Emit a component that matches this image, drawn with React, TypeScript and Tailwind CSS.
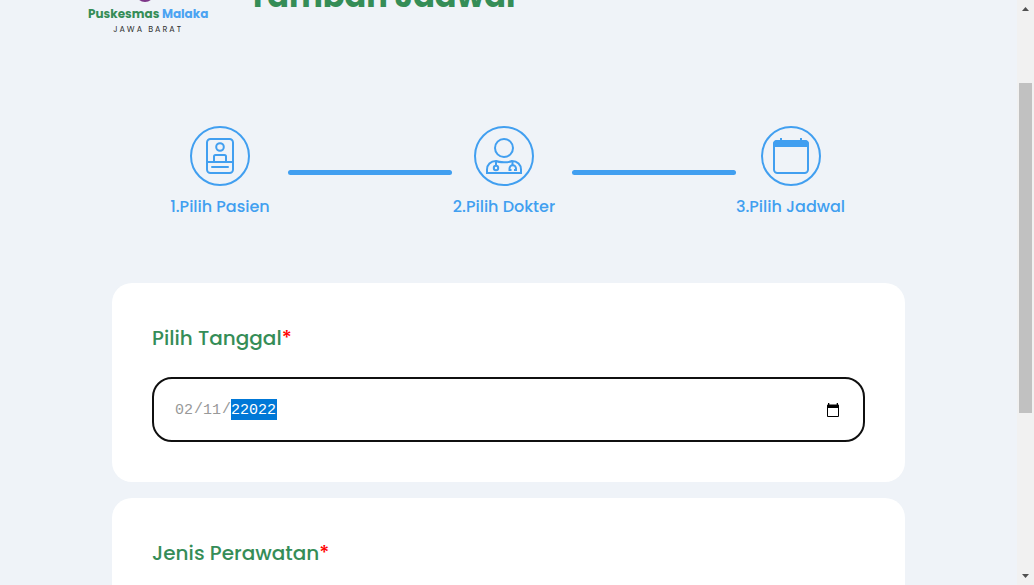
import { useState } from 'react';
import type { ReactNode } from 'react';

function PatientIcon() {
  return (
    <svg viewBox="0 0 40 40" className="size-10" fill="none" stroke="currentColor" strokeWidth="2" aria-hidden="true">
      <rect x="7" y="3" width="26" height="34" rx="3.5" />
      <circle cx="20" cy="11" r="3.8" />
      <path d="M14 26v-5.500a1.500 1.500 0 0 1 1.500-1.500h9a1.500 1.500 0 0 1 1.500 1.500V26M7 26h26" />
      <path d="M12 31h16" strokeLinecap="round" />
    </svg>
  );
}

function DoctorIcon() {
  return (
    <svg viewBox="0 0 40 40" className="size-10" fill="none" stroke="currentColor" strokeWidth="2" aria-hidden="true">
      <circle cx="20" cy="12" r="9" />
      <path d="M3 37v-3.500c0-4.500 3.500-8.500 9-8.500 2 1 5 1.200 8 1.200s6-.2 8-1.200c5.500 0 9 4 9 8.500V37Z" />
      <path d="M12 25.500v4.500M28.500 25.500v4" />
      <circle cx="12" cy="32" r="2.200" />
      <path d="M27.500 34h-2V32.500a3 3 0 0 1 6.500 0V34h-2" />
    </svg>
  );
}

function CalendarIcon() {
  return (
    <svg viewBox="0 0 40 40" className="size-10" fill="none" stroke="currentColor" strokeWidth="2" aria-hidden="true">
      <rect x="3" y="5" width="34" height="32" rx="3.500" />
      <path d="M2 11V8a4 4 0 0 1 4-4h28a4 4 0 0 1 4 4v3Z" fill="currentColor" stroke="none" />
      <path d="M10 2v4M30 2v4" />
    </svg>
  );
}

function Step({ label, icon }: { label: string; icon: ReactNode }) {
  return (
    <li className="flex min-w-[104px] flex-col items-center gap-[9px]">
      <span className="flex size-[60px] items-center justify-center rounded-full border-2 border-[#419ff0]">{icon}</span>
      <span className="text-base leading-6 font-medium whitespace-nowrap">{label}</span>
    </li>
  );
}

function StepLine() {
  return <li aria-hidden="true" className="ml-4 h-[5px] w-[164px] rounded-full bg-[#419ff0]" />;
}

function Required() {
  return <span className="text-[#f00]">*</span>;
}

function DateField() {
  const [day, setDay] = useState('02');
  const [month, setMonth] = useState('11');
  const [year, setYear] = useState('22022');
  return (
    <fieldset>
      <legend className="text-xl leading-[30px] font-medium text-[#358d57]">
        Pilih Tanggal<Required />
      </legend>
      <div className="mt-6 flex h-[65px] items-center rounded-[20px] border-2 border-[#101010] px-[21px] font-['Liberation_Mono',monospace] text-[15px] leading-5 text-[#999]">
        <input aria-label="Hari" value={day} onChange={(e) => setDay(e.target.value)} className="h-[21px] w-[19px] pt-px outline-none" />
        <span>/</span>
        <input aria-label="Bulan" value={month} onChange={(e) => setMonth(e.target.value)} className="h-[21px] w-[19px] pt-px outline-none" />
        <span>/</span>
        <input aria-label="Tahun" value={year} onChange={(e) => setYear(e.target.value)} className="h-[21px] w-[46px] bg-[#0078d7] pt-px text-white outline-none" />
        <button type="button" aria-label="Buka kalender" className="mr-0.5 ml-auto text-black">
          <svg viewBox="0 0 14 14" className="size-[14px]" aria-hidden="true">
            <path d="M1 2.500A1 1 0 0 1 2 1.500V0h1.300v1.500h7.400V0H12v1.500a1 1 0 0 1 1 1V13a1 1 0 0 1-1 1H2a1 1 0 0 1-1-1ZM2 5v8h10V5Z" fill="currentColor" fillRule="evenodd" />
          </svg>
        </button>
      </div>
    </fieldset>
  );
}

function Scrollbar() {
  return (
    <div aria-hidden="true" className="flex w-[17px] shrink-0 flex-col items-center bg-[#f1f1f1]">
      <svg viewBox="0 0 17 17" className="size-[17px]">
        <path d="M5 11h7L8.500 7Z" fill="#505050" />
      </svg>
      <div className="mt-[66px] h-[330px] w-[13px] bg-[#c1c1c1]" />
      <svg viewBox="0 0 17 17" className="mt-auto size-[17px]">
        <path d="M5 6h7l-3.500 4Z" fill="#505050" />
      </svg>
    </div>
  );
}

export default function App() {
  return (
    <div className="flex h-screen overflow-hidden bg-[#eff3f8] font-['Poppins','Inter',sans-serif]">
      <main className="min-w-0 flex-1 overflow-hidden">
        <header className="-mt-11 flex gap-10 px-[88px]">
          <div className="flex flex-col items-center">
            <svg viewBox="0 0 60 46" className="h-[46px] w-[60px]" fill="none" aria-hidden="true">
              <path d="M20 20v18.500a7 6 0 0 0 14 0V20" stroke="#7d3588" strokeWidth="3" />
            </svg>
            <p className="mt-1 text-xs leading-4 font-bold whitespace-nowrap text-[#358d57]">
              Puskesmas <span className="text-[#4ba3f2]">Malaka</span>
            </p>
            <p className="text-[8px] leading-4 tracking-[2px] text-[#333]">JAWA BARAT</p>
          </div>
          <h1 className="mt-4 text-[32px] leading-[48px] font-bold whitespace-nowrap text-[#358d57]">Tambah Jadwal</h1>
        </header>

        <ol className="mt-[88px] flex items-center justify-center pr-1 text-[#419ff0]">
          <Step label="1.Pilih Pasien" icon={<PatientIcon />} />
          <StepLine />
          <Step label="2.Pilih Dokter" icon={<DoctorIcon />} />
          <StepLine />
          <Step label="3.Pilih Jadwal" icon={<CalendarIcon />} />
        </ol>

        <form className="mx-28 mt-16 flex flex-col gap-4">
          <section className="rounded-[20px] bg-white p-10">
            <DateField />
          </section>
          <section className="rounded-[20px] bg-white p-10">
            <h2 className="text-xl leading-[30px] font-medium text-[#358d57]">
              Jenis Perawatan<Required />
            </h2>
          </section>
        </form>
      </main>
      <Scrollbar />
    </div>
  );
}
